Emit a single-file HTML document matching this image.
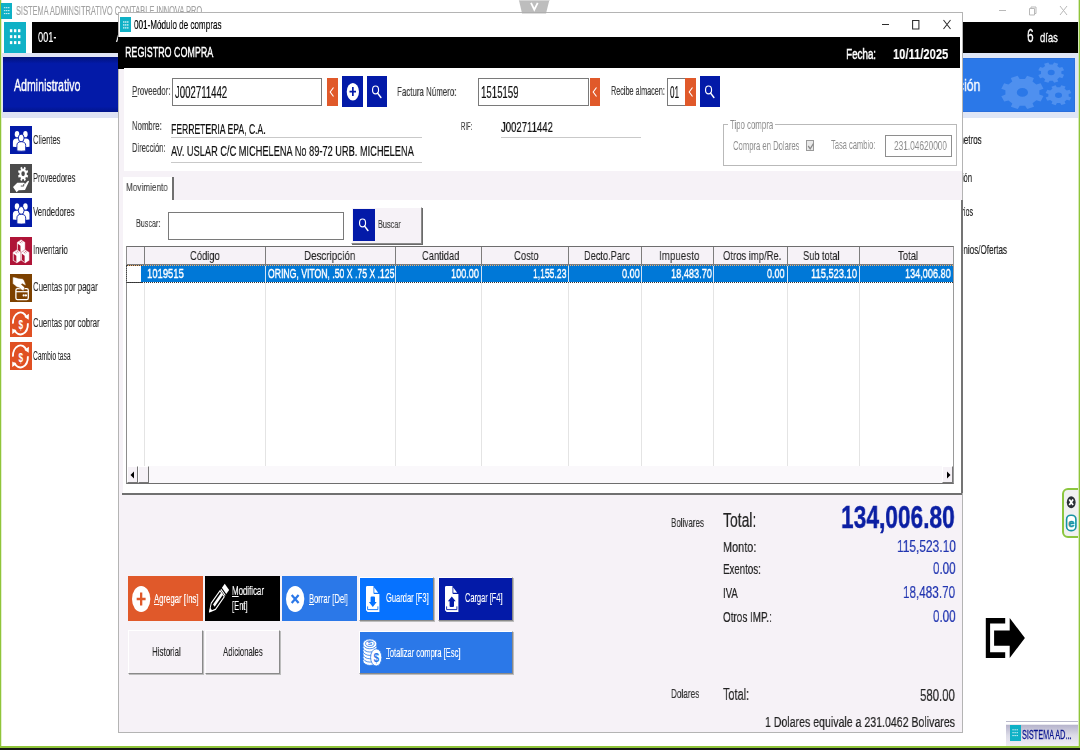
<!DOCTYPE html>
<html lang="es"><head><meta charset="utf-8"><title>SISTEMA ADMINSITRATIVO CONTABLE INNOVA PRO</title>
<style>
html,body{margin:0;padding:0;}
body{width:1080px;height:750px;position:relative;overflow:hidden;background:#fff;font-family:"Liberation Sans",sans-serif;}
.b{position:absolute;box-sizing:border-box;}
.t{position:absolute;white-space:nowrap;transform-origin:0 0;line-height:1;display:block;will-change:transform;}
svg{position:absolute;overflow:visible;}
u{text-decoration:underline;}
</style></head><body>
<div class="b" style="left:0px;top:0px;width:1px;height:750px;background:#90c53a;"></div>
<div class="b" style="left:1px;top:0px;width:1px;height:750px;background:#e2f0cc;"></div>
<div class="b" style="left:1.2px;top:2.9px;width:10.8px;height:15.7px;background:#0fb1c6;"></div>
<svg style="left:1.200px;top:2.900px" width="10.800" height="15.700" viewBox="1.200 2.900 10.800 15.700"><g fill="#d9f3f7"><rect x="4.1" y="7.1" width="1.500" height="1"/><rect x="6.1499999999999995" y="7.1" width="1.500" height="1"/><rect x="8.2" y="7.1" width="1.500" height="1"/><rect x="4.1" y="10.05" width="1.500" height="1"/><rect x="6.1499999999999995" y="10.05" width="1.500" height="1"/><rect x="8.2" y="10.05" width="1.500" height="1"/><rect x="4.1" y="13.0" width="1.500" height="1"/><rect x="6.1499999999999995" y="13.0" width="1.500" height="1"/><rect x="8.2" y="13.0" width="1.500" height="1"/></g></svg>
<span class="t" style="left:15.70px;top:5.12px;font-size:12.86px;color:#a3a3a3;-webkit-text-stroke:0.2px #a3a3a3;transform:scaleX(0.5789);">SISTEMA ADMINSITRATIVO CONTABLE INNOVA PRO</span>
<svg style="left:995px;top:2px" width="80" height="18" viewBox="0 0 80 18"><g stroke="#b9b9b9" stroke-width="1" fill="none"><path d="M4 8.5h7"/><path d="M34.5 6.500h5v6.500h-5z M36 6.500v-1.500h5v6.500h-1.500"/><path d="M65 4l7 9M72 4l-7 9"/></g></svg>
<div class="b" style="left:4px;top:22px;width:22px;height:31px;background:#0fb1c6;"></div>
<svg style="left:4px;top:22px" width="22" height="31" viewBox="4 22 22 31"><g fill="#fff"><rect x="9.90" y="29.20" width="2.400" height="3"/><rect x="13.95" y="29.20" width="2.400" height="3"/><rect x="18.00" y="29.20" width="2.400" height="3"/><rect x="9.90" y="35.15" width="2.400" height="3"/><rect x="13.95" y="35.15" width="2.400" height="3"/><rect x="18.00" y="35.15" width="2.400" height="3"/><rect x="9.90" y="41.10" width="2.400" height="3"/><rect x="13.95" y="41.10" width="2.400" height="3"/><rect x="18.00" y="41.10" width="2.400" height="3"/></g></svg>
<div class="b" style="left:32px;top:22px;width:1046px;height:31px;background:#000;"></div>
<span class="t" style="left:38.00px;top:29.06px;font-size:15.29px;color:#fff;-webkit-text-stroke:0.2px #fff;transform:scaleX(0.6019);">001-</span>
<span class="t" style="left:115.90px;top:29.06px;font-size:15.29px;color:#fff;-webkit-text-stroke:0.2px #fff;transform:scaleX(0.6933);">A</span>
<span class="t" style="left:1027.00px;top:28.18px;font-size:17.86px;color:#fff;-webkit-text-stroke:0.4px #fff;transform:scaleX(0.6559);">6</span>
<span class="t" style="left:1040.00px;top:30.57px;font-size:13.14px;color:#fff;-webkit-text-stroke:0.4px #fff;transform:scaleX(0.7166);">días</span>
<div class="b" style="left:2px;top:53px;width:116px;height:65px;background:#dfe3f4;"></div>
<div class="b" style="left:3px;top:57px;width:115px;height:55px;background:#031aa8;background:linear-gradient(#02127a 0,#031aa8 12%,#031aa8 90%,#02158c 100%);"></div>
<span class="t" style="left:14.10px;top:77.58px;font-size:15.86px;color:#fff;-webkit-text-stroke:0.45px #fff;transform:scaleX(0.6668);">Administrativo</span>
<div class="b" style="left:962px;top:53px;width:116px;height:65px;background:#dfe6f6;"></div>
<div class="b" style="left:962px;top:58px;width:113px;height:54px;background:#2b78e8;overflow:hidden;box-shadow:inset 0 0 0 1px #2a6fdc"><svg style="left:0;top:0" width="113" height="54" viewBox="962 58 113 54"><g fill="#4f90ef" fill-rule="evenodd"><g transform="translate(1022.400 92.400) scale(1 0.790)"><path d="M21.09 4.65 L18.27 11.52 L13.94 10.07 L10.15 13.89 L11.62 18.21 L4.77 21.07 L2.74 16.98 L-2.64 17.00 L-4.65 21.09 L-11.52 18.27 L-10.07 13.94 L-13.89 10.15 L-18.21 11.62 L-21.07 4.77 L-16.98 2.74 L-17.00 -2.64 L-21.09 -4.65 L-18.27 -11.52 L-13.94 -10.07 L-10.15 -13.89 L-11.62 -18.21 L-4.77 -21.07 L-2.74 -16.98 L2.64 -17.00 L4.65 -21.09 L11.52 -18.27 L10.07 -13.94 L13.89 -10.15 L18.21 -11.62 L21.07 -4.77 L16.98 -2.74 L17.00 2.64Z M-5.60 0.00a5.6 5.6 0 1 0 11.2 0a5.6 5.6 0 1 0 -11.2 0Z"/></g><g transform="translate(1051.200 72.600) scale(1 0.790)"><path d="M12.89 2.84 L11.16 7.04 L8.35 6.03 L6.08 8.32 L7.10 11.13 L2.91 12.87 L1.64 10.17 L-1.58 10.18 L-2.84 12.89 L-7.04 11.16 L-6.03 8.35 L-8.32 6.08 L-11.13 7.10 L-12.87 2.91 L-10.17 1.64 L-10.18 -1.58 L-12.89 -2.84 L-11.16 -7.04 L-8.35 -6.03 L-6.08 -8.32 L-7.10 -11.13 L-2.91 -12.87 L-1.64 -10.17 L1.58 -10.18 L2.84 -12.89 L7.04 -11.16 L6.03 -8.35 L8.32 -6.08 L11.13 -7.10 L12.87 -2.91 L10.17 -1.64 L10.18 1.58Z M-3.50 0.00a3.5 3.5 0 1 0 7.0 0a3.5 3.5 0 1 0 -7.0 0Z"/></g><g transform="translate(1058.500 95.200) scale(1 0.770)"><path d="M12.89 2.84 L11.16 7.04 L8.35 6.03 L6.08 8.32 L7.10 11.13 L2.91 12.87 L1.64 10.17 L-1.58 10.18 L-2.84 12.89 L-7.04 11.16 L-6.03 8.35 L-8.32 6.08 L-11.13 7.10 L-12.87 2.91 L-10.17 1.64 L-10.18 -1.58 L-12.89 -2.84 L-11.16 -7.04 L-8.35 -6.03 L-6.08 -8.32 L-7.10 -11.13 L-2.91 -12.87 L-1.64 -10.17 L1.58 -10.18 L2.84 -12.89 L7.04 -11.16 L6.03 -8.35 L8.32 -6.08 L11.13 -7.10 L12.87 -2.91 L10.17 -1.64 L10.18 1.58Z M-3.50 0.00a3.5 3.5 0 1 0 7.0 0a3.5 3.5 0 1 0 -7.0 0Z"/></g></g></svg></div>
<span class="t" style="left:905.00px;top:77.80px;font-size:15.71px;color:#fff;-webkit-text-stroke:0.3px #fff;transform:scaleX(0.7766);">Configuración</span>
<div class="b" style="left:10px;top:126px;width:22px;height:28px;background:#031aa8;"></div>
<svg style="left:10px;top:126px" width="22" height="28" viewBox="0 0 22 28" preserveAspectRatio="none"><g fill="#fff"><ellipse cx="7" cy="8.200" rx="2.250" ry="3.150"/><ellipse cx="15.400" cy="8.200" rx="2.250" ry="3.150"/><path d="M2.900 20.800V16Q2.900 12.400 6.300 12.400H8Q10.300 12.400 10.300 14.500V21.600Z"/><path d="M19.500 20.800V16Q19.500 12.400 16.100 12.400H14.400Q12.100 12.400 12.100 14.500V21.600Z"/><ellipse cx="11.200" cy="12" rx="2.900" ry="3.850" stroke="#031aa8" stroke-width="0.900"/><path d="M6.900 24.900V19.500Q6.900 15.700 11.200 15.700Q15.700 15.700 15.700 19.500V24.900Q11.300 25.500 6.900 24.900Z" stroke="#031aa8" stroke-width="0.900"/></g></svg>
<span class="t" style="left:32.80px;top:133.54px;font-size:12.00px;color:#2a2a2a;-webkit-text-stroke:0.12px #2a2a2a;transform:scaleX(0.6339);">Clientes</span>
<div class="b" style="left:10px;top:164px;width:22px;height:29px;background:#4b4b4b;"></div>
<svg style="left:10px;top:164px" width="22" height="29" viewBox="0 0 22 28" preserveAspectRatio="none"><g transform="translate(13.100 9.500) scale(1 1.360)"><path d="M5.07 1.14 L4.39 2.79 L2.99 2.18 L2.17 2.99 L2.78 4.39 L1.13 5.08 L0.58 3.65 L-0.58 3.65 L-1.14 5.07 L-2.79 4.39 L-2.18 2.99 L-2.99 2.17 L-4.39 2.78 L-5.08 1.13 L-3.65 0.58 L-3.65 -0.58 L-5.07 -1.14 L-4.39 -2.79 L-2.99 -2.18 L-2.17 -2.99 L-2.78 -4.39 L-1.13 -5.08 L-0.58 -3.65 L0.58 -3.65 L1.14 -5.07 L2.79 -4.39 L2.18 -2.99 L2.99 -2.17 L4.39 -2.78 L5.08 -1.13 L3.65 -0.58 L3.65 0.58Z M-1.75 0.00a1.75 1.75 0 1 0 3.5 0a1.75 1.75 0 1 0 -3.5 0Z" fill="#fff" fill-rule="evenodd"/></g><path d="M3 22.300L7.300 18L14 18.200Q15 18.600 14.500 19.800L17.500 16.600Q18.600 15.800 19 17L15 25L8.700 25.300L6.600 27.300Z" fill="#fff"/><path d="M10.800 21.300H13.700V19.300" fill="none" stroke="#4b4b4b" stroke-width="0.900"/></svg>
<span class="t" style="left:33.30px;top:171.64px;font-size:12.00px;color:#2a2a2a;-webkit-text-stroke:0.12px #2a2a2a;transform:scaleX(0.6232);">Proveedores</span>
<div class="b" style="left:10px;top:198px;width:22px;height:29px;background:#031aa8;"></div>
<svg style="left:10px;top:198px" width="22" height="29" viewBox="0 0 22 28" preserveAspectRatio="none"><g fill="#fff"><ellipse cx="7" cy="8.200" rx="2.250" ry="3.150"/><ellipse cx="15.400" cy="8.200" rx="2.250" ry="3.150"/><path d="M2.900 20.800V16Q2.900 12.400 6.300 12.400H8Q10.300 12.400 10.300 14.500V21.600Z"/><path d="M19.500 20.800V16Q19.500 12.400 16.100 12.400H14.400Q12.100 12.400 12.100 14.500V21.600Z"/><ellipse cx="11.200" cy="12" rx="2.900" ry="3.850" stroke="#031aa8" stroke-width="0.900"/><path d="M6.900 24.900V19.500Q6.900 15.700 11.200 15.700Q15.700 15.700 15.700 19.500V24.900Q11.300 25.500 6.900 24.900Z" stroke="#031aa8" stroke-width="0.900"/></g></svg>
<span class="t" style="left:32.80px;top:205.94px;font-size:12.00px;color:#2a2a2a;-webkit-text-stroke:0.12px #2a2a2a;transform:scaleX(0.6492);">Vendedores</span>
<div class="b" style="left:10px;top:237px;width:22px;height:28px;background:#af1437;"></div>
<svg style="left:10px;top:237px" width="22" height="28" viewBox="0 0 22 28" preserveAspectRatio="none"><path d="M11.05 2.4L15.200000000000001 5.15V13.35L11.05 16.1L6.9 13.35V5.15Z" fill="#fff" stroke="#af1437" stroke-width="0.350"/><path d="M7.800000000000001 6.65L10.5 8.65V15.000000000000002L7.800000000000001 12.9Z" fill="#af1437"/><path d="M9.450000000000001 4.8500000000000005L11.25 6.050000000000001M10.850000000000001 3.95L12.65 5.15" stroke="#af1437" stroke-width="0.550" fill="none"/><path d="M6.9 12.6L11.05 15.35V23.549999999999997L6.9 26.3L2.75 23.549999999999997V15.35Z" fill="#fff" stroke="#af1437" stroke-width="0.350"/><path d="M3.65 16.85L6.3500000000000005 18.85V25.2L3.65 23.099999999999998Z" fill="#af1437"/><path d="M5.300000000000001 15.049999999999999L7.1000000000000005 16.25M6.7 14.15L8.5 15.35" stroke="#af1437" stroke-width="0.550" fill="none"/><path d="M15.2 12.6L19.35 15.35V23.549999999999997L15.2 26.3L11.049999999999999 23.549999999999997V15.35Z" fill="#fff" stroke="#af1437" stroke-width="0.350"/><path d="M11.95 16.85L14.649999999999999 18.85V25.2L11.95 23.099999999999998Z" fill="#af1437"/><path d="M13.6 15.049999999999999L15.399999999999999 16.25M15.0 14.15L16.8 15.35" stroke="#af1437" stroke-width="0.550" fill="none"/></svg>
<span class="t" style="left:33.20px;top:244.14px;font-size:12.00px;color:#2a2a2a;-webkit-text-stroke:0.12px #2a2a2a;transform:scaleX(0.6606);">Inventario</span>
<div class="b" style="left:10px;top:274px;width:22px;height:28px;background:#7d4100;"></div>
<svg style="left:10px;top:274px" width="22" height="28" viewBox="0 0 22 28" preserveAspectRatio="none"><rect x="5.900" y="14.700" width="12.400" height="11" rx="1.600" fill="none" stroke="#fff" stroke-width="1.300"/><path d="M5.900 17.700H18.300" stroke="#fff" stroke-width="1.200"/><circle cx="13.700" cy="21.400" r="1.150" fill="#fff"/><circle cx="15.900" cy="21.400" r="1.150" fill="#fff"/><path d="M2.700 3.200L4 3Q8 4.500 12.500 4.700Q14.200 5.500 15.700 10.500V11.600L12 9.700L11.400 10.500L14.600 13.200L14.100 16Q13 17.300 11.500 15.800L9.500 14Q6 13.500 4.500 11L2.700 9.700Z" fill="#fff" stroke="#7d4100" stroke-width="0.500"/></svg>
<span class="t" style="left:32.90px;top:281.34px;font-size:12.00px;color:#2a2a2a;-webkit-text-stroke:0.12px #2a2a2a;transform:scaleX(0.6508);">Cuentas por pagar</span>
<div class="b" style="left:10px;top:309px;width:22px;height:28px;background:#e05023;"></div>
<svg style="left:10px;top:309px" width="22" height="28" viewBox="0 0 22 28" preserveAspectRatio="none"><g fill="none" stroke="#fff" stroke-width="1.900"><path d="M2.900 14.600A7.500 10.800 0 0 1 16.900 8.800"/><path d="M17.900 14.200A7.500 10.800 0 0 1 4.200 20.700"/></g><path d="M14.300 7.700L18.900 4.700L18.700 10.800Z" fill="#fff"/><path d="M2.300 19.400L2.200 24.900L6.600 21.900Z" fill="#fff"/><text x="0" y="0" font-size="12.500" font-weight="700" fill="#fff" text-anchor="middle" font-family="Liberation Sans, sans-serif" transform="translate(10.800 19.500) scale(0.660 1)">$</text></svg>
<span class="t" style="left:32.90px;top:316.84px;font-size:12.00px;color:#2a2a2a;-webkit-text-stroke:0.12px #2a2a2a;transform:scaleX(0.6484);">Cuentas por cobrar</span>
<div class="b" style="left:10px;top:342px;width:22px;height:28px;background:#e05023;"></div>
<svg style="left:10px;top:342px" width="22" height="28" viewBox="0 0 22 28" preserveAspectRatio="none"><g fill="none" stroke="#fff" stroke-width="1.900"><path d="M2.900 14.600A7.500 10.800 0 0 1 16.900 8.800"/><path d="M17.900 14.200A7.500 10.800 0 0 1 4.200 20.700"/></g><path d="M14.300 7.700L18.900 4.700L18.700 10.800Z" fill="#fff"/><path d="M2.300 19.400L2.200 24.900L6.600 21.900Z" fill="#fff"/><text x="0" y="0" font-size="12.500" font-weight="700" fill="#fff" text-anchor="middle" font-family="Liberation Sans, sans-serif" transform="translate(10.800 19.500) scale(0.660 1)">$</text></svg>
<span class="t" style="left:32.90px;top:349.84px;font-size:12.00px;color:#2a2a2a;-webkit-text-stroke:0.12px #2a2a2a;transform:scaleX(0.5575);">Cambio tasa</span>
<span class="t" style="left:940.00px;top:133.60px;font-size:12.29px;color:#222;-webkit-text-stroke:0.2px #222;transform:scaleX(0.6565);">Parámetros</span>
<span class="t" style="left:925.00px;top:171.60px;font-size:12.29px;color:#222;-webkit-text-stroke:0.2px #222;transform:scaleX(0.6200);">Configuración</span>
<span class="t" style="left:945.00px;top:206.10px;font-size:12.29px;color:#222;-webkit-text-stroke:0.2px #222;transform:scaleX(0.5777);">Usuarios</span>
<span class="t" style="left:940.00px;top:244.10px;font-size:12.29px;color:#222;-webkit-text-stroke:0.2px #222;transform:scaleX(0.6586);">Convenios/Ofertas</span>
<svg style="left:0;top:0" width="1080" height="750" viewBox="0 0 1080 750"><path d="M985.800 618H1005.200V623.600H990.100V652.300H1005.200V657.900H985.800Z" fill="#000"/><path d="M994.100 630.400H1009.700V618L1024.900 638L1009.700 657.900V645.800H994.100Z" fill="#000"/></svg>
<div class="b" style="left:1061.6px;top:487.8px;width:24.4px;height:49.8px;background:#f1f1f1;border:2px solid #8cc63f;border-radius:6px;"></div>
<svg style="left:1064px;top:494px" width="14" height="40" viewBox="1064 494 14 40"><ellipse cx="1071.200" cy="502.300" rx="4.400" ry="6" fill="#2b2f36"/><path d="M1069.300 499.500l3.800 5.600M1073.100 499.500l-3.800 5.600" stroke="#fff" stroke-width="1.700"/><rect x="1066.600" y="515.200" width="9.300" height="15.400" rx="4.200" fill="#fff" stroke="#1793a2" stroke-width="1.600"/><text x="1071.250" y="526.800" font-size="11" font-weight="700" stroke="#1793a2" stroke-width="0.500" fill="#1793a2" text-anchor="middle" font-family="Liberation Sans, sans-serif">e</text></svg>
<div class="b" style="left:1006px;top:721px;width:73px;height:25px;background:#d9d9e6;background:linear-gradient(#fff 0,#fff 9%,#b7b5cd 14%,#dcdbe7 55%,#f0eef5 100%);border-top:1px solid #b9bacb;"></div>
<div class="b" style="left:1010px;top:725px;width:11px;height:16px;background:#0fb1c6;"></div>
<svg style="left:1010px;top:725px" width="11" height="16" viewBox="1010 725 11 16"><g fill="#c9eef4"><rect x="1012.3" y="729.3" width="1.500" height="1"/><rect x="1014.4" y="729.3" width="1.500" height="1"/><rect x="1016.5" y="729.3" width="1.500" height="1"/><rect x="1012.3" y="732.1999999999999" width="1.500" height="1"/><rect x="1014.4" y="732.1999999999999" width="1.500" height="1"/><rect x="1016.5" y="732.1999999999999" width="1.500" height="1"/><rect x="1012.3" y="735.0999999999999" width="1.500" height="1"/><rect x="1014.4" y="735.0999999999999" width="1.500" height="1"/><rect x="1016.5" y="735.0999999999999" width="1.500" height="1"/></g></svg>
<span class="t" style="left:1022.00px;top:728.72px;font-size:12.14px;color:#0a1590;-webkit-text-stroke:0.3px #0a1590;transform:scaleX(0.6012);">SISTEMA AD...</span>
<div class="b" style="left:0px;top:746px;width:1080px;height:2px;background:#90c53a;"></div>
<div class="b" style="left:0px;top:748px;width:1080px;height:2px;background:#161616;"></div>
<div class="b" style="left:1079px;top:0px;width:1px;height:746px;background:#90c53a;"></div>
<div class="b" style="left:1078px;top:0px;width:1px;height:746px;background:#d5e9b9;"></div>
<div class="b" style="left:118px;top:12px;width:845px;height:721px;background:#f6f2f7;border:1px solid #b4b4b4;"></div>
<div class="b" style="left:119px;top:13px;width:843px;height:24px;background:#fff;"></div>
<div class="b" style="left:120px;top:16.5px;width:11px;height:15.6px;background:#0fb1c6;"></div>
<svg style="left:120px;top:16.500px" width="11" height="15.600" viewBox="120 16.500 11 15.600"><g fill="#c9eef4"><rect x="123.2" y="20.6" width="1.200" height="1.800"/><rect x="125.2" y="20.6" width="1.200" height="1.800"/><rect x="127.2" y="20.6" width="1.200" height="1.800"/><rect x="123.2" y="23.5" width="1.200" height="1.800"/><rect x="125.2" y="23.5" width="1.200" height="1.800"/><rect x="127.2" y="23.5" width="1.200" height="1.800"/><rect x="123.2" y="26.400000000000002" width="1.200" height="1.800"/><rect x="125.2" y="26.400000000000002" width="1.200" height="1.800"/><rect x="127.2" y="26.400000000000002" width="1.200" height="1.800"/></g></svg>
<span class="t" style="left:134.40px;top:17.50px;font-size:13.00px;color:#000;-webkit-text-stroke:0.2px #000;transform:scaleX(0.6241);">001-Módulo de compras</span>
<svg style="left:878px;top:16px" width="80" height="18" viewBox="0 0 80 18"><g stroke="#2d2d2d" stroke-width="1.050" fill="none"><path d="M4 8.500h7"/><path d="M34.600 4.500h6.300v8.500h-6.300z"/><path d="M65.500 4l7 9M72.500 4l-7 9"/></g></svg>
<div class="b" style="left:118px;top:37px;width:842px;height:31px;background:#000;"></div>
<div class="b" style="left:118px;top:68px;width:6px;height:1px;background:#000;"></div>
<div class="b" style="left:960px;top:37px;width:2px;height:31px;background:#fff;"></div>
<span class="t" style="left:125.30px;top:44.74px;font-size:14.71px;color:#fff;-webkit-text-stroke:0.45px #fff;transform:scaleX(0.6065);">REGISTRO COMPRA</span>
<span class="t" style="left:845.60px;top:46.44px;font-size:15.43px;color:#fff;-webkit-text-stroke:0.45px #fff;transform:scaleX(0.6386);">Fecha:</span>
<span class="t" style="left:892.70px;top:46.44px;font-size:15.43px;color:#fff;font-weight:700;-webkit-text-stroke:0.2px #fff;transform:scaleX(0.7241);">10/11/2025</span>
<div class="b" style="left:124px;top:68px;width:838px;height:103px;background:#fff;"></div>
<span class="t" style="left:132.00px;top:85.36px;font-size:12.57px;color:#3c3c3c;-webkit-text-stroke:0.2px #3c3c3c;transform:scaleX(0.6263);"><u>P</u>roveedor:</span>
<div class="b" style="left:172px;top:78px;width:150px;height:28px;background:#fff;border:1px solid #7a7a7a;"></div>
<span class="t" style="left:174.70px;top:84.14px;font-size:16.14px;color:#111;-webkit-text-stroke:0.2px #111;transform:scaleX(0.5955);">J002711442</span>
<div class="b" style="left:327.2px;top:78px;width:10.5px;height:28px;background:#e0592a;"></div>
<svg style="left:329.45px;top:87.0px" width="6" height="10" viewBox="0 0 6 10"><path d="M4.500 0.500L1.200 5l3.300 4.500" stroke="#fff" stroke-width="1.100" fill="none"/></svg>
<div class="b" style="left:342.4px;top:76px;width:20.4px;height:31px;background:#031aa8;"></div>
<svg style="left:346px;top:82px" width="14" height="20" viewBox="346 82 14 20"><ellipse cx="352.850" cy="91.750" rx="6.150" ry="8.750" fill="#fff"/><path d="M352.850 87.100V95.900M349.500 91.600H356" stroke="#031aa8" stroke-width="1.700"/></svg>
<div class="b" style="left:367px;top:76px;width:20px;height:31px;background:#031aa8;"></div>
<svg style="left:369.00px;top:81.50px" width="16" height="20" viewBox="-8 -10 16 20"><ellipse cx="-1.450" cy="-2.100" rx="3" ry="3.900" stroke="#fff" stroke-width="1.150" fill="none"/><path d="M0.600 1.100L3.900 5.500" stroke="#fff" stroke-width="1.500" stroke-linecap="round"/></svg>
<span class="t" style="left:397.30px;top:85.86px;font-size:12.57px;color:#3c3c3c;-webkit-text-stroke:0.2px #3c3c3c;transform:scaleX(0.6306);">Factura Número:</span>
<div class="b" style="left:478px;top:78px;width:111px;height:28px;background:#fff;border:1px solid #7a7a7a;"></div>
<span class="t" style="left:480.60px;top:84.14px;font-size:16.14px;color:#111;-webkit-text-stroke:0.2px #111;transform:scaleX(0.5980);">1515159</span>
<div class="b" style="left:590px;top:78px;width:10.2px;height:28px;background:#e0592a;"></div>
<svg style="left:592.1px;top:87.0px" width="6" height="10" viewBox="0 0 6 10"><path d="M4.500 0.500L1.200 5l3.300 4.500" stroke="#fff" stroke-width="1.100" fill="none"/></svg>
<span class="t" style="left:610.70px;top:84.66px;font-size:12.57px;color:#3c3c3c;-webkit-text-stroke:0.2px #3c3c3c;transform:scaleX(0.5755);">Recibe almacen:</span>
<div class="b" style="left:667px;top:78px;width:18.6px;height:28px;background:#fff;border:1px solid #7a7a7a;"></div>
<span class="t" style="left:669.60px;top:84.14px;font-size:16.14px;color:#111;-webkit-text-stroke:0.2px #111;transform:scaleX(0.5023);">01</span>
<div class="b" style="left:685.4px;top:78px;width:10.8px;height:28px;background:#e0592a;"></div>
<svg style="left:687.8px;top:87.0px" width="6" height="10" viewBox="0 0 6 10"><path d="M4.500 0.500L1.200 5l3.300 4.500" stroke="#fff" stroke-width="1.100" fill="none"/></svg>
<div class="b" style="left:700px;top:76px;width:19.7px;height:31px;background:#031aa8;"></div>
<svg style="left:701.85px;top:81.50px" width="16" height="20" viewBox="-8 -10 16 20"><ellipse cx="-1.450" cy="-2.100" rx="3" ry="3.900" stroke="#fff" stroke-width="1.150" fill="none"/><path d="M0.600 1.100L3.900 5.500" stroke="#fff" stroke-width="1.500" stroke-linecap="round"/></svg>
<span class="t" style="left:132.00px;top:120.86px;font-size:11.86px;color:#3c3c3c;-webkit-text-stroke:0.2px #3c3c3c;transform:scaleX(0.6531);">Nombre:</span>
<span class="t" style="left:171.00px;top:121.54px;font-size:14.71px;color:#111;-webkit-text-stroke:0.2px #111;transform:scaleX(0.5859);">FERRETERIA EPA, C.A.</span>
<div class="b" style="left:171px;top:137px;width:250.7px;height:1px;background:#c9c9c9;"></div>
<span class="t" style="left:132.00px;top:143.36px;font-size:11.86px;color:#3c3c3c;-webkit-text-stroke:0.2px #3c3c3c;transform:scaleX(0.6356);">Dirección:</span>
<span class="t" style="left:171.00px;top:144.24px;font-size:14.71px;color:#111;-webkit-text-stroke:0.2px #111;transform:scaleX(0.6282);">AV. USLAR C/C MICHELENA No 89-72 URB. MICHELENA</span>
<div class="b" style="left:171px;top:162px;width:250.7px;height:1px;background:#c9c9c9;"></div>
<span class="t" style="left:460.50px;top:120.73px;font-size:11.43px;color:#3c3c3c;-webkit-text-stroke:0.2px #3c3c3c;transform:scaleX(0.5231);">RIF:</span>
<span class="t" style="left:500.60px;top:119.94px;font-size:14.71px;color:#111;-webkit-text-stroke:0.2px #111;transform:scaleX(0.6496);">J002711442</span>
<div class="b" style="left:500.6px;top:137px;width:140.9px;height:1px;background:#c9c9c9;"></div>
<div class="b" style="left:723px;top:124px;width:234px;height:42px;border:1px solid #b9b9b9;"></div>
<div class="b" style="left:728px;top:119px;width:47px;height:12px;background:#fff;"></div>
<span class="t" style="left:729.80px;top:118.60px;font-size:12.29px;color:#8d8d8d;transform:scaleX(0.6364);">Tipo compra</span>
<span class="t" style="left:732.50px;top:140.00px;font-size:12.29px;color:#8d8d8d;transform:scaleX(0.6243);">Compra en Dolares</span>
<div class="b" style="left:805.7px;top:140.4px;width:8.3px;height:10.6px;background:#e9e9e9;border:1px solid #9a9a9a;"></div>
<svg style="left:806.500px;top:141.500px" width="8" height="9" viewBox="0 0 8 9"><path d="M1.200 4l2 2.800 3.300-5.300" stroke="#8a8a8a" stroke-width="1.300" fill="none"/></svg>
<span class="t" style="left:830.80px;top:139.30px;font-size:12.29px;color:#8d8d8d;transform:scaleX(0.6136);">Tasa cambio:</span>
<div class="b" style="left:885px;top:135px;width:67px;height:22.4px;background:#fff;border:1px solid #8e8e8e;"></div>
<span class="t" style="left:894.00px;top:139.76px;font-size:12.57px;color:#8d8d8d;transform:scaleX(0.6593);">231.04620000</span>
<div class="b" style="left:122.6px;top:176.9px;width:49.6px;height:23.6px;background:#fff;"></div>
<div class="b" style="left:172.2px;top:176.9px;width:1.5px;height:23.1px;background:#707070;"></div>
<span class="t" style="left:126.00px;top:181.51px;font-size:10.86px;color:#3c3c3c;-webkit-text-stroke:0.1px #3c3c3c;transform:scaleX(0.7527);">Movimiento</span>
<div class="b" style="left:122.6px;top:200px;width:838.7px;height:293px;background:#fff;"></div>
<div class="b" style="left:961.3px;top:200px;width:1.7px;height:293px;background:#747474;"></div>
<span class="t" style="left:135.80px;top:218.35px;font-size:11.29px;color:#3c3c3c;-webkit-text-stroke:0.2px #3c3c3c;transform:scaleX(0.6378);">Buscar:</span>
<div class="b" style="left:168px;top:212px;width:176px;height:28px;background:#fff;border:1px solid #7a7a7a;"></div>
<div class="b" style="left:351px;top:207px;width:71px;height:37px;background:#f6f2f7;border:1px solid;border-color:#fff #8a8a8a #8a8a8a #fff;box-shadow:1px 1px 0 #6a6a6a;"></div>
<div class="b" style="left:353px;top:209px;width:22px;height:31.5px;background:#031aa8;"></div>
<svg style="left:356.00px;top:214.75px" width="16" height="20" viewBox="-8 -10 16 20"><ellipse cx="-1.450" cy="-2.100" rx="3" ry="3.900" stroke="#fff" stroke-width="1.150" fill="none"/><path d="M0.600 1.100L3.900 5.500" stroke="#fff" stroke-width="1.500" stroke-linecap="round"/></svg>
<span class="t" style="left:377.70px;top:219.39px;font-size:11.00px;color:#3c3c3c;-webkit-text-stroke:0.15px #3c3c3c;transform:scaleX(0.6665);">Buscar</span>
<div class="b" style="left:126px;top:246px;width:828px;height:238px;background:#fff;border:1px solid #6e6e6e;border-left-color:#8d8d8d;border-right-color:#9a9a9a;"></div>
<div class="b" style="left:127px;top:247px;width:826px;height:18px;background:#f6f2f7;border-bottom:1px solid #7d7d7d;"></div>
<div class="b" style="left:144px;top:247px;width:1px;height:17px;background:#7d7d7d;"></div>
<div class="b" style="left:144px;top:283px;width:1px;height:183px;background:#e4e4e4;"></div>
<div class="b" style="left:265px;top:247px;width:1px;height:17px;background:#7d7d7d;"></div>
<div class="b" style="left:265px;top:283px;width:1px;height:183px;background:#e4e4e4;"></div>
<div class="b" style="left:395px;top:247px;width:1px;height:17px;background:#7d7d7d;"></div>
<div class="b" style="left:395px;top:283px;width:1px;height:183px;background:#e4e4e4;"></div>
<div class="b" style="left:481px;top:247px;width:1px;height:17px;background:#7d7d7d;"></div>
<div class="b" style="left:481px;top:283px;width:1px;height:183px;background:#e4e4e4;"></div>
<div class="b" style="left:568px;top:247px;width:1px;height:17px;background:#7d7d7d;"></div>
<div class="b" style="left:568px;top:283px;width:1px;height:183px;background:#e4e4e4;"></div>
<div class="b" style="left:641px;top:247px;width:1px;height:17px;background:#7d7d7d;"></div>
<div class="b" style="left:641px;top:283px;width:1px;height:183px;background:#e4e4e4;"></div>
<div class="b" style="left:713px;top:247px;width:1px;height:17px;background:#7d7d7d;"></div>
<div class="b" style="left:713px;top:283px;width:1px;height:183px;background:#e4e4e4;"></div>
<div class="b" style="left:787px;top:247px;width:1px;height:17px;background:#7d7d7d;"></div>
<div class="b" style="left:787px;top:283px;width:1px;height:183px;background:#e4e4e4;"></div>
<div class="b" style="left:859px;top:247px;width:1px;height:17px;background:#7d7d7d;"></div>
<div class="b" style="left:859px;top:283px;width:1px;height:183px;background:#e4e4e4;"></div>
<span class="t" style="left:190.00px;top:249.33px;font-size:13.43px;color:#222;-webkit-text-stroke:0.1px #222;transform:scaleX(0.7000);">Código</span>
<span class="t" style="left:304.30px;top:249.33px;font-size:13.43px;color:#222;-webkit-text-stroke:0.1px #222;transform:scaleX(0.7311);">Descripción</span>
<span class="t" style="left:421.60px;top:249.33px;font-size:13.43px;color:#222;-webkit-text-stroke:0.1px #222;transform:scaleX(0.6954);">Cantidad</span>
<span class="t" style="left:513.80px;top:249.33px;font-size:13.43px;color:#222;-webkit-text-stroke:0.1px #222;transform:scaleX(0.7047);">Costo</span>
<span class="t" style="left:584.20px;top:249.33px;font-size:13.43px;color:#222;-webkit-text-stroke:0.1px #222;transform:scaleX(0.6882);">Decto.Parc</span>
<span class="t" style="left:659.20px;top:249.33px;font-size:13.43px;color:#222;-webkit-text-stroke:0.1px #222;transform:scaleX(0.7311);">Impuesto</span>
<span class="t" style="left:723.00px;top:249.33px;font-size:13.43px;color:#222;-webkit-text-stroke:0.1px #222;transform:scaleX(0.7049);">Otros imp/Re.</span>
<span class="t" style="left:803.00px;top:249.33px;font-size:13.43px;color:#222;-webkit-text-stroke:0.1px #222;transform:scaleX(0.6890);">Sub total</span>
<span class="t" style="left:897.90px;top:249.33px;font-size:13.43px;color:#222;-webkit-text-stroke:0.1px #222;transform:scaleX(0.7094);">Total</span>
<div class="b" style="left:127px;top:265px;width:826px;height:17px;background:#0078d7;"></div>
<div class="b" style="left:127px;top:265px;width:14px;height:17px;background:#fff;"></div>
<div class="b" style="left:265px;top:266px;width:1px;height:16px;background:#cfe2f5;"></div>
<div class="b" style="left:395px;top:266px;width:1px;height:16px;background:#cfe2f5;"></div>
<div class="b" style="left:481px;top:266px;width:1px;height:16px;background:#cfe2f5;"></div>
<div class="b" style="left:568px;top:266px;width:1px;height:16px;background:#cfe2f5;"></div>
<div class="b" style="left:641px;top:266px;width:1px;height:16px;background:#cfe2f5;"></div>
<div class="b" style="left:713px;top:266px;width:1px;height:16px;background:#cfe2f5;"></div>
<div class="b" style="left:787px;top:266px;width:1px;height:16px;background:#cfe2f5;"></div>
<div class="b" style="left:859px;top:266px;width:1px;height:16px;background:#cfe2f5;"></div>
<div class="b" style="left:127px;top:265px;width:826px;height:1px;border-top:1px dotted #efae6b;"></div>
<div class="b" style="left:127px;top:282px;width:826px;height:1px;border-top:1px dotted #333;"></div>
<div class="b" style="left:126px;top:265px;width:16px;height:18px;border:1px dotted #444;border-right:none;"></div>
<span class="t" style="left:147.10px;top:267.33px;font-size:13.43px;color:#fff;-webkit-text-stroke:0.42px #fff;transform:scaleX(0.7055);">1019515</span>
<span class="t" style="left:268.00px;top:267.33px;font-size:13.43px;color:#fff;-webkit-text-stroke:0.42px #fff;transform:scaleX(0.6452);">ORING, VITON, .50 X .75 X .125</span>
<span class="t" style="left:451.00px;top:267.33px;font-size:13.43px;color:#fff;-webkit-text-stroke:0.42px #fff;transform:scaleX(0.6814);">100.00</span>
<span class="t" style="left:533.00px;top:267.33px;font-size:13.43px;color:#fff;-webkit-text-stroke:0.42px #fff;transform:scaleX(0.6405);">1,155.23</span>
<span class="t" style="left:622.30px;top:267.33px;font-size:13.43px;color:#fff;-webkit-text-stroke:0.42px #fff;transform:scaleX(0.6777);">0.00</span>
<span class="t" style="left:670.50px;top:267.33px;font-size:13.43px;color:#fff;-webkit-text-stroke:0.42px #fff;transform:scaleX(0.6861);">18,483.70</span>
<span class="t" style="left:767.00px;top:267.33px;font-size:13.43px;color:#fff;-webkit-text-stroke:0.42px #fff;transform:scaleX(0.6700);">0.00</span>
<span class="t" style="left:811.00px;top:267.33px;font-size:13.43px;color:#fff;-webkit-text-stroke:0.42px #fff;transform:scaleX(0.6948);">115,523.10</span>
<span class="t" style="left:904.50px;top:267.33px;font-size:13.43px;color:#fff;-webkit-text-stroke:0.42px #fff;transform:scaleX(0.6814);">134,006.80</span>
<div class="b" style="left:127px;top:466px;width:826px;height:17px;background:#faf8fb;"></div>
<div class="b" style="left:127px;top:466px;width:11px;height:17px;background:#f6f2f7;border:1px solid;border-color:#fff #777 #777 #fff;"></div>
<svg style="left:129.500px;top:471px" width="5" height="8" viewBox="0 0 5 8"><path d="M4 0.500V7.500L0.500 4Z" fill="#000"/></svg>
<div class="b" style="left:138px;top:466px;width:11px;height:17px;background:#f6f2f7;border:1px solid;border-color:#fff #777 #777 #fff;"></div>
<div class="b" style="left:942px;top:466px;width:11px;height:17px;background:#f6f2f7;border:1px solid;border-color:#fff #777 #777 #fff;"></div>
<svg style="left:946px;top:471px" width="5" height="8" viewBox="0 0 5 8"><path d="M1 0.500V7.500L4.500 4Z" fill="#000"/></svg>
<div class="b" style="left:122px;top:493px;width:840px;height:2px;background:#707070;"></div>
<span class="t" style="left:670.50px;top:516.96px;font-size:12.57px;color:#333;-webkit-text-stroke:0.2px #333;transform:scaleX(0.6360);">Bolivares</span>
<span class="t" style="left:723.20px;top:510.07px;font-size:20.00px;color:#222;-webkit-text-stroke:0.2px #222;transform:scaleX(0.6967);">Total:</span>
<span class="t" style="left:723.20px;top:539.30px;font-size:15.00px;color:#222;-webkit-text-stroke:0.2px #222;transform:scaleX(0.7267);">Monto:</span>
<span class="t" style="left:723.20px;top:561.30px;font-size:15.00px;color:#222;-webkit-text-stroke:0.2px #222;transform:scaleX(0.6478);">Exentos:</span>
<span class="t" style="left:723.20px;top:585.10px;font-size:15.00px;color:#222;-webkit-text-stroke:0.2px #222;transform:scaleX(0.6407);">IVA</span>
<span class="t" style="left:723.20px;top:609.30px;font-size:15.00px;color:#222;-webkit-text-stroke:0.2px #222;transform:scaleX(0.6606);">Otros IMP.:</span>
<span class="t" style="left:841.30px;top:502.03px;font-size:31.86px;color:#0b1fa3;font-weight:700;-webkit-text-stroke:0.5px #0b1fa3;transform:scaleX(0.7131);">134,006.80</span>
<span class="t" style="left:896.50px;top:537.99px;font-size:17.14px;color:#2135b0;-webkit-text-stroke:0.2px #2135b0;transform:scaleX(0.6969);">115,523.10</span>
<span class="t" style="left:932.80px;top:560.09px;font-size:17.14px;color:#2135b0;-webkit-text-stroke:0.2px #2135b0;transform:scaleX(0.6778);">0.00</span>
<span class="t" style="left:903.30px;top:584.29px;font-size:17.14px;color:#2135b0;-webkit-text-stroke:0.2px #2135b0;transform:scaleX(0.6830);">18,483.70</span>
<span class="t" style="left:932.80px;top:608.29px;font-size:17.14px;color:#2135b0;-webkit-text-stroke:0.2px #2135b0;transform:scaleX(0.6778);">0.00</span>
<span class="t" style="left:670.50px;top:687.66px;font-size:12.57px;color:#333;-webkit-text-stroke:0.2px #333;transform:scaleX(0.6535);">Dolares</span>
<span class="t" style="left:723.20px;top:686.70px;font-size:15.71px;color:#222;-webkit-text-stroke:0.2px #222;transform:scaleX(0.6949);">Total:</span>
<span class="t" style="left:920.00px;top:687.29px;font-size:17.14px;color:#222;-webkit-text-stroke:0.2px #222;transform:scaleX(0.6672);">580.00</span>
<span class="t" style="left:765.00px;top:714.24px;font-size:15.43px;color:#222;-webkit-text-stroke:0.2px #222;transform:scaleX(0.6859);">1 Dolares equivale a 231.0462 Bolivares</span>
<div class="b" style="left:128px;top:576px;width:75.3px;height:44.5px;background:#e0592a;"></div>
<div class="b" style="left:205.3px;top:576px;width:74.7px;height:44.5px;background:#000;"></div>
<div class="b" style="left:282.2px;top:576px;width:74.8px;height:44.5px;background:#2b78e8;"></div>
<div class="b" style="left:359px;top:576.5px;width:74.7px;height:44.1px;background:#0672ff;border:1px solid;border-color:#fff #8a8a8a #8a8a8a #fff;box-shadow:1px 1px 0 #bdbdbd;"></div>
<div class="b" style="left:438px;top:576.5px;width:74.5px;height:44.1px;background:#031aa8;border:1px solid;border-color:#fff #8a8a8a #8a8a8a #fff;box-shadow:1px 1px 0 #bdbdbd;"></div>
<div class="b" style="left:128.3px;top:630.3px;width:74.7px;height:44.0px;background:#f6f2f7;border:1px solid;border-color:#fff #8a8a8a #8a8a8a #fff;box-shadow:1px 1px 0 #bdbdbd;"></div>
<div class="b" style="left:205.3px;top:630.3px;width:74.7px;height:44.0px;background:#f6f2f7;border:1px solid;border-color:#fff #8a8a8a #8a8a8a #fff;box-shadow:1px 1px 0 #bdbdbd;"></div>
<div class="b" style="left:359px;top:630.5px;width:153.5px;height:43.9px;background:#2b78e8;border:1px solid;border-color:#fff #8a8a8a #8a8a8a #fff;box-shadow:1px 1px 0 #bdbdbd;"></div>
<span class="t" style="left:151.50px;top:646.36px;font-size:12.57px;color:#222;-webkit-text-stroke:0.1px #222;transform:scaleX(0.6346);">Historial</span>
<span class="t" style="left:222.80px;top:646.36px;font-size:12.57px;color:#222;-webkit-text-stroke:0.1px #222;transform:scaleX(0.6174);">Adicionales</span>
<svg style="left:132.3px;top:585.8px" width="18.3" height="26" viewBox="0 0 18.3 26" preserveAspectRatio="none"><ellipse cx="9.150" cy="13" rx="9.150" ry="13" fill="#fff"/><path d="M9.150 6.500v13M4.700 13h8.900" stroke="#e0592a" stroke-width="2.300"/></svg>
<span class="t" style="left:154.40px;top:592.72px;font-size:12.14px;color:#fff;-webkit-text-stroke:0.2px #fff;transform:scaleX(0.6416);"><u>A</u>gregar [Ins]</span>
<svg style="left:209px;top:585.5px" width="18.5" height="26.5" viewBox="0 0 18.5 18.5" preserveAspectRatio="none"><g transform="translate(0.400 18.100) rotate(-45)"><rect x="20.800" y="-3.100" width="4" height="6.200" fill="#fff"/><rect x="18.900" y="-3.100" width="0.900" height="6.200" fill="#fff"/><path d="M18 -3H5.500L0 0L5.500 3H18Z" fill="none" stroke="#fff" stroke-width="0.950" stroke-linejoin="round"/><rect x="6.300" y="-1.150" width="11.700" height="2.300" fill="#fff"/><path d="M-0.300 0L2.700 -1.500V1.500Z" fill="#fff"/></g></svg>
<span class="t" style="left:231.90px;top:586.36px;font-size:11.86px;color:#fff;-webkit-text-stroke:0.2px #fff;transform:scaleX(0.6635);"><u>M</u>odificar</span>
<span class="t" style="left:231.90px;top:600.96px;font-size:11.86px;color:#fff;-webkit-text-stroke:0.2px #fff;transform:scaleX(0.6402);">[Ent]</span>
<svg style="left:286.3px;top:585.8px" width="18.3" height="26" viewBox="0 0 18.3 26" preserveAspectRatio="none"><ellipse cx="9.150" cy="13" rx="9.150" ry="13" fill="#fff"/><path d="M5.700 9l6.900 8M12.600 9l-6.900 8" stroke="#2b78e8" stroke-width="2.200"/></svg>
<span class="t" style="left:309.00px;top:592.72px;font-size:12.14px;color:#fff;-webkit-text-stroke:0.2px #fff;transform:scaleX(0.6279);"><u>B</u>orrar [Del]</span>
<svg style="left:365.7px;top:585.9px" width="13.4" height="26.1" viewBox="0 0 13.4 26.1" preserveAspectRatio="none"><path d="M1.200 0H7.500V7Q7.500 8 8.500 8H13.400V26.100H1.700L0 24.300V1.200Q0 0 1.200 0Z" fill="#fff"/><path d="M8.300 1.600L12.200 6.700H8.300Z" fill="#fff"/><path d="M4.600 11.500Q4.600 10.500 5.600 10.500H8Q9 10.500 9 11.500V16.100H10.700L6.800 21.100L2.900 16.100H4.600Z" fill="#0672ff"/><path d="M1.600 20.400V23.600H11.900V20.400" fill="none" stroke="#0672ff" stroke-width="0.900"/></svg>
<span class="t" style="left:385.60px;top:592.96px;font-size:11.86px;color:#fff;-webkit-text-stroke:0.2px #fff;transform:scaleX(0.6351);">Guardar [F3]</span>
<svg style="left:444.7px;top:585.9px" width="13.4" height="26.1" viewBox="0 0 13.4 26.1" preserveAspectRatio="none"><path d="M1.200 0H7.500V7Q7.500 8 8.500 8H13.400V26.100H1.700L0 24.300V1.200Q0 0 1.200 0Z" fill="#fff"/><path d="M8.300 1.600L12.200 6.700H8.300Z" fill="#fff"/><path d="M6.800 10.500L10.700 15.300H9V20.100Q9 21.100 8 21.100H5.600Q4.600 21.100 4.600 20.100V15.300H2.900Z" fill="#031aa8"/><path d="M1.600 20.400V23.600H11.900V20.400" fill="none" stroke="#031aa8" stroke-width="0.900"/></svg>
<span class="t" style="left:464.50px;top:592.96px;font-size:11.86px;color:#fff;-webkit-text-stroke:0.2px #fff;transform:scaleX(0.6256);">Cargar [F4]</span>
<svg style="left:363px;top:639.2px" width="19" height="27.5" viewBox="0 0 19 27.5" preserveAspectRatio="none"><g fill="#fff" stroke="#2b78e8" stroke-width="0.800"><ellipse cx="6.900" cy="21.65" rx="7" ry="4.800"/><ellipse cx="6.900" cy="18.30" rx="7" ry="4.800"/><ellipse cx="6.900" cy="14.95" rx="7" ry="4.800"/><ellipse cx="6.900" cy="11.60" rx="7" ry="4.800"/><ellipse cx="6.900" cy="8.25" rx="7" ry="4.800"/><ellipse cx="6.900" cy="4.900" rx="7" ry="4.900"/><ellipse cx="6.900" cy="4.700" rx="4.300" ry="2.800"/><ellipse cx="13.200" cy="18.400" rx="5.600" ry="8.600"/></g><text x="13.200" y="23" font-size="12.500" font-weight="700" fill="#2b78e8" text-anchor="middle" font-family="Liberation Sans, sans-serif" transform="translate(13.200 0) scale(0.800 1) translate(-13.200 0)">$</text><text x="6.900" y="6.400" font-size="5" font-weight="700" fill="#2b78e8" text-anchor="middle" font-family="Liberation Sans, sans-serif" transform="translate(6.900 0) scale(1.300 1) translate(-6.900 0)">S</text></svg>
<span class="t" style="left:385.60px;top:646.64px;font-size:12.00px;color:#fff;-webkit-text-stroke:0.2px #fff;transform:scaleX(0.6304);"><u>T</u>otalizar compra [Esc]</span>
<svg style="left:0;top:0" width="1080" height="14" viewBox="0 0 1080 14"><path d="M518.900 0H549.400L546.100 13.300H522Z" fill="#bdbdbd"/><path d="M518.900 0H549.400L549.150 1H519.150Z" fill="#d6d6d6"/><path d="M521.750 12.200H546.350L546.100 13.300H522Z" fill="#aaa"/><path d="M531 2.800L534.300 9.600L537.700 2.800" stroke="#fff" stroke-width="1.800" fill="none"/></svg>
</body></html>
